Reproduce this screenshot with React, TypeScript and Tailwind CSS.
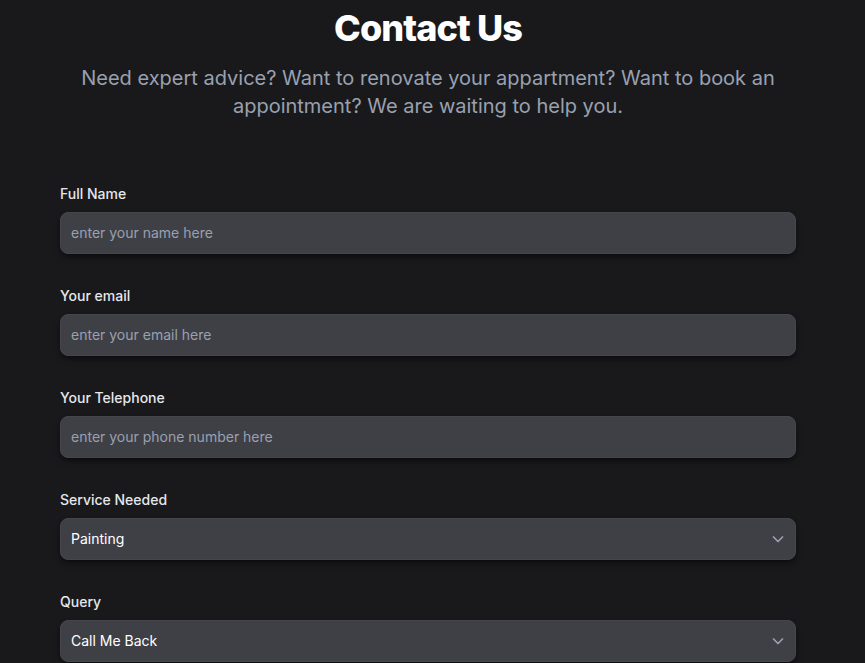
import React from "react";

const fields = [
  { id: "name", label: "Full Name", placeholder: "enter your name here", type: "text" },
  { id: "email", label: "Your email", placeholder: "enter your email here", type: "email" },
  { id: "phone", label: "Your Telephone", placeholder: "enter your phone number here", type: "tel" },
];

function Chevron() {
  return (
    <svg className="pointer-events-none absolute right-2 top-1/2 -translate-y-1/2 h-5 w-5 text-gray-400" viewBox="0 0 20 20" fill="none" stroke="currentColor" strokeWidth="1.75" strokeLinecap="round" strokeLinejoin="round">
      <path d="M5.5 8l4.5 4.5L14.5 8" />
    </svg>
  );
}

export default function App() {
  return (
    <div className="min-h-screen bg-[#19191c] font-['Inter',sans-serif]">
      <section className="w-[856px] pt-[8px]">
        <div className="mx-auto max-w-screen-md px-4">
          <h2 className="mb-4 text-center text-4xl font-extrabold tracking-tight text-white">Contact Us</h2>
          <p className="mb-16 px-0.5 text-center text-xl text-gray-400">
            Need expert advice? Want to renovate your appartment? Want to book an appointment? We are waiting to help you.
          </p>
          <form className="space-y-8">
            {fields.map((f) => (
              <div key={f.id}>
                <label htmlFor={f.id} className="mb-2 block text-sm font-medium text-gray-200">
                  {f.label}
                </label>
                <input
                  id={f.id}
                  type={f.type}
                  placeholder={f.placeholder}
                  className="block w-full rounded-lg border border-[#45454c] bg-[#3f3f46] px-2.5 py-2.5 text-sm text-white shadow-md shadow-black/40 placeholder:text-gray-400 outline-none"
                />
              </div>
            ))}
            <div>
              <label htmlFor="service" className="mb-2 block text-sm font-medium text-gray-200">
                Service Needed
              </label>
              <div className="relative">
                <select id="service" className="block w-full appearance-none rounded-lg border border-[#45454c] bg-[#3f3f46] px-2.5 py-2.5 text-sm text-white shadow-md shadow-black/40 outline-none">
                  <option>Painting</option>
                  <option>Plumbing</option>
                  <option>Renovation</option>
                </select>
                <Chevron />
              </div>
            </div>
            <div>
              <label htmlFor="query" className="mb-2 block text-sm font-medium text-gray-200">
                Query
              </label>
              <div className="relative">
                <select id="query" className="block w-full appearance-none rounded-lg border border-[#45454c] bg-[#3f3f46] px-2.5 py-2.5 text-sm text-white shadow-md shadow-black/40 outline-none">
                  <option>Call Me Back</option>
                  <option>Email Me</option>
                </select>
                <Chevron />
              </div>
            </div>
          </form>
        </div>
      </section>
    </div>
  );
}
